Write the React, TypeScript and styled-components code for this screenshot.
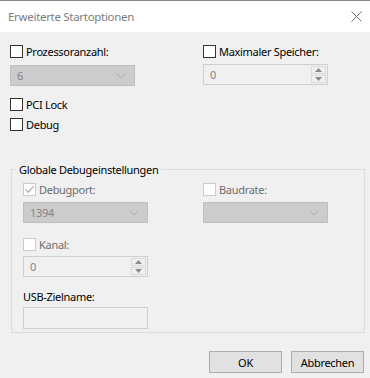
import React from "react";
import styled, { createGlobalStyle } from "styled-components";

const GlobalStyle = createGlobalStyle`
  html, body {
    margin: 0;
    padding: 0;
    background: #f0f0f0;
  }
  body {
    font-family: "Segoe UI", "Noto Sans", "Liberation Sans", sans-serif;
    font-size: 11px;
    letter-spacing: -0.3px;
    color: #000;
  }
`;

const colors = {
  face: "#f0f0f0",
  text: "#000000",
  disabledText: "#6d6d6d",
  disabledValue: "#838383",
  comboFill: "#cccccc",
  comboBorder: "#bfbfbf",
  editBorder: "#cfcfcf",
  groupBorder: "#dcdcdc",
  button: "#e1e1e1",
  buttonBorder: "#adadad",
};

type CheckProps = {
  label: string;
  checked?: boolean;
  disabled?: boolean;
};

const Check: React.FC<CheckProps> = ({ label, checked, disabled }) => (
  <CheckRow>
    <Box $disabled={disabled}>
      {checked && (
        <svg width="11" height="11" viewBox="0 0 11 11">
          <path
            d="M1.5 5.5 L4.3 8.3 L9.6 2.2"
            fill="none"
            stroke={disabled ? "#b4b4b4" : "#333"}
            strokeWidth="1.3"
          />
        </svg>
      )}
    </Box>
    <CheckLabel $disabled={disabled}>{label}</CheckLabel>
  </CheckRow>
);

const Combo: React.FC<{ value?: string }> = ({ value }) => (
  <ComboBox>
    <ComboValue>{value}</ComboValue>
    <svg width="10" height="6" viewBox="0 0 10 6">
      <path d="M0.5 0.5 L5 5 L9.5 0.5" fill="none" stroke="#a8a8a8" strokeWidth="1" />
    </svg>
  </ComboBox>
);

const Spin: React.FC<{ value: string }> = ({ value }) => (
  <SpinBox>
    <SpinValue>{value}</SpinValue>
    <SpinButtons>
      <SpinButton>
        <svg width="7" height="4" viewBox="0 0 7 4">
          <path d="M0 4 L3.5 0 L7 4 Z" fill="#8a8a8a" />
        </svg>
      </SpinButton>
      <SpinButton>
        <svg width="7" height="4" viewBox="0 0 7 4">
          <path d="M0 0 L3.5 4 L7 0 Z" fill="#8a8a8a" />
        </svg>
      </SpinButton>
    </SpinButtons>
  </SpinBox>
);

export default function App() {
  return (
    <>
      <GlobalStyle />
      <Window>
        <TitleBar>
          <Title>Erweiterte Startoptionen</Title>
          <svg width="11" height="11" viewBox="0 0 11 11">
            <path d="M0.5 0.5 L10.5 10.5 M10.5 0.5 L0.5 10.5" stroke="#6a6a6a" strokeWidth="1" />
          </svg>
        </TitleBar>
        <Body>
          <TopGrid>
            <Column>
              <Check label="Prozessoranzahl:" />
              <Field $top={7}>
                <Combo value="6" />
              </Field>
            </Column>
            <Column>
              <Check label="Maximaler Speicher:" />
              <Field $top={6}>
                <Spin value="0" />
              </Field>
            </Column>
          </TopGrid>
          <Field $top={12}>
            <Check label="PCI Lock" />
          </Field>
          <Field $top={7}>
            <Check label="Debug" />
          </Field>

          <Group>
            <GroupTitle>Globale Debugeinstellungen</GroupTitle>
            <GroupGrid>
              <Column>
                <Check label="Debugport:" checked disabled />
                <Field $top={6}>
                  <Combo value="1394" />
                </Field>
                <Field $top={15}>
                  <Check label="Kanal:" disabled />
                </Field>
                <Field $top={5}>
                  <Spin value="0" />
                </Field>
                <FieldLabel>USB-Zielname:</FieldLabel>
                <TextBox />
              </Column>
              <Column>
                <Check label="Baudrate:" disabled />
                <Field $top={6}>
                  <Combo />
                </Field>
              </Column>
            </GroupGrid>
          </Group>

          <ButtonRow>
            <Button>OK</Button>
            <Button>Abbrechen</Button>
          </ButtonRow>
        </Body>
      </Window>
    </>
  );
}

const Window = styled.div`
  width: 370px;
  height: 378px;
  background: ${colors.face};
  box-sizing: border-box;
  border-top: 1px solid #8a8a8a;
  display: flex;
  flex-direction: column;
  overflow: hidden;
`;

const TitleBar = styled.div`
  height: 31px;
  background: #fff;
  display: flex;
  align-items: center;
  justify-content: space-between;
  padding: 0 8px 0 8px;
  flex-shrink: 0;
`;

const Title = styled.span`
  color: #7d7d7d;
  font-size: 11.5px;
`;

const Body = styled.div`
  padding: 13px 6px 0 10px;
  display: flex;
  flex-direction: column;
`;

const TopGrid = styled.div`
  display: grid;
  grid-template-columns: 193px 125px;
`;

const Column = styled.div`
  display: flex;
  flex-direction: column;
`;

const Field = styled.div<{ $top: number }>`
  margin-top: ${(p) => p.$top}px;
`;

const CheckRow = styled.div`
  display: flex;
  align-items: center;
  height: 13px;
  gap: 3px;
`;

const Box = styled.div<{ $disabled?: boolean }>`
  width: 13px;
  height: 13px;
  box-sizing: border-box;
  border: 1px solid ${(p) => (p.$disabled ? "#cccccc" : "#333333")};
  background: #fff;
  display: flex;
  align-items: center;
  justify-content: center;
  flex-shrink: 0;
`;

const CheckLabel = styled.span<{ $disabled?: boolean }>`
  color: ${(p) => (p.$disabled ? colors.disabledText : colors.text)};
  line-height: 13px;
  white-space: nowrap;
`;

const ComboBox = styled.div`
  width: 125px;
  height: 21px;
  box-sizing: border-box;
  background: ${colors.comboFill};
  border: 1px solid ${colors.comboBorder};
  display: flex;
  align-items: center;
  justify-content: space-between;
  padding: 0 8px 0 6px;
`;

const ComboValue = styled.span`
  color: ${colors.disabledValue};
`;

const SpinBox = styled.div`
  width: 125px;
  height: 21px;
  box-sizing: border-box;
  border: 1px solid ${colors.editBorder};
  background: ${colors.face};
  display: flex;
  align-items: stretch;
`;

const SpinValue = styled.span`
  flex: 1;
  color: ${colors.disabledValue};
  padding-left: 6px;
  display: flex;
  align-items: center;
`;

const SpinButtons = styled.div`
  width: 15px;
  display: flex;
  flex-direction: column;
  gap: 1px;
  padding: 1px 1px 1px 0;
`;

const SpinButton = styled.div`
  flex: 1;
  border: 1px solid #dadada;
  display: flex;
  align-items: center;
  justify-content: center;
`;

const Group = styled.div`
  position: relative;
  margin: 38px 0 0 1px;
  padding: 13px 11px 3px 11px;
  width: 354px;
  box-sizing: border-box;
  border: 1px solid ${colors.groupBorder};
`;

const GroupTitle = styled.span`
  position: absolute;
  top: -8px;
  left: 4px;
  padding: 0 3px;
  line-height: 15px;
  background: ${colors.face};
  color: ${colors.text};
  white-space: nowrap;
`;

const GroupGrid = styled.div`
  display: grid;
  grid-template-columns: 180px 125px;
`;

const FieldLabel = styled.span`
  margin-top: 13px;
  line-height: 14px;
  color: ${colors.text};
`;

const TextBox = styled.div`
  margin-top: 3px;
  width: 125px;
  height: 22px;
  box-sizing: border-box;
  border: 1px solid ${colors.editBorder};
  background: ${colors.face};
`;

const ButtonRow = styled.div`
  display: flex;
  justify-content: flex-end;
  gap: 9px;
  margin-top: 18px;
`;

const Button = styled.button`
  width: 73px;
  height: 22px;
  box-sizing: border-box;
  background: ${colors.button};
  border: 1px solid ${colors.buttonBorder};
  font-family: inherit;
  font-size: 11px;
  letter-spacing: inherit;
  color: ${colors.text};
  padding: 0;
`;
